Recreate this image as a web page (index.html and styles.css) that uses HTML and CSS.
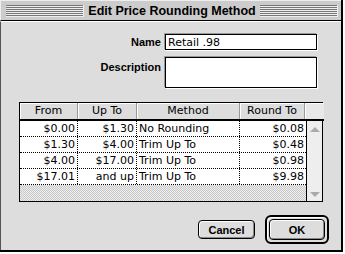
FILE: index.html
```html
<!DOCTYPE html>
<html lang="en">
<head>
  <meta charset="UTF-8" />
  <title>Edit Price Rounding Method</title>
  <link rel="stylesheet" href="styles.css">
</head>
<body>
  <div class="window">
    <div class="title-bar">
      <span class="stripes"></span>
      <span class="title">Edit Price Rounding Method</span>
      <span class="stripes"></span>
    </div>

    <div class="content">
      <div class="fields">
        <label for="name">Name</label>
        <input type="text" id="name" value="Retail .98" />
        <label for="desc" class="desc-label">Description</label>
        <textarea id="desc"></textarea>
      </div>

      <div class="table">
        <div class="head">
          <div class="th">From</div>
          <div class="th">Up To</div>
          <div class="th">Method</div>
          <div class="th">Round To</div>
          <div class="th corner"></div>
        </div>
        <div class="body">
          <div class="rows">
            <div class="row">
              <div class="td num">$0.00</div>
              <div class="td num">$1.30</div>
              <div class="td">No Rounding</div>
              <div class="td num">$0.08</div>
            </div>
            <div class="row">
              <div class="td num">$1.30</div>
              <div class="td num">$4.00</div>
              <div class="td">Trim Up To</div>
              <div class="td num">$0.48</div>
            </div>
            <div class="row">
              <div class="td num">$4.00</div>
              <div class="td num">$17.00</div>
              <div class="td">Trim Up To</div>
              <div class="td num">$0.98</div>
            </div>
            <div class="row">
              <div class="td num">$17.01</div>
              <div class="td num">and up</div>
              <div class="td">Trim Up To</div>
              <div class="td num">$9.98</div>
            </div>
            <div class="filler"></div>
          </div>
          <div class="scrollbar">
            <span class="arrow up"></span>
            <span class="arrow down"></span>
          </div>
        </div>
      </div>

      <div class="buttons">
        <button class="btn">Cancel</button>
        <span class="default-ring"><button class="btn ok">OK</button></span>
      </div>
    </div>
  </div>
</body>
</html>
```

FILE: styles.css
```css
body {
  margin: 0;
  background: #fff;
  font-family: "DejaVu Sans", sans-serif;
}

.window {
  width: 343px;
  height: 252px;
  background: #dddddd;
  border-right: 2px solid #000;
  border-bottom: 2px solid #000;
  display: flex;
  flex-direction: column;
  box-sizing: border-box;
}

.title-bar {
  height: 21px;
  background: #cccccc;
  border-top: 1px solid #eee;
  border-left: 1px solid #eee;
  border-bottom: 1px solid #000;
  box-sizing: border-box;
  display: flex;
  align-items: center;
  padding: 0 3px 0 5px;
  gap: 4px;
}

.stripes {
  flex: 1;
  height: 11px;
  background: repeating-linear-gradient(to bottom, #777 0 1px, #eee 1px 2px);
  border-right: 1px solid #eee;
  border-bottom: 1px solid #eee;
}

.title {
  font-family: "Liberation Sans", Arial, sans-serif;
  font-weight: bold;
  font-size: 12.5px;
  color: #000;
}

.content {
  flex: 1;
  border-left: 1px solid #555;
  border-top: 1px solid #fff;
  padding: 12px 22px 0 18px;
  display: flex;
  flex-direction: column;
}

.fields {
  display: grid;
  grid-template-columns: 145px 152px;
  column-gap: 4px;
  row-gap: 7px;
  justify-content: end;
  margin-right: 2px;
}

.fields label {
  font-family: "Liberation Sans", Arial, sans-serif;
  font-weight: bold;
  font-size: 11px;
  text-align: right;
  padding-top: 2px;
}

.fields .desc-label {
  padding-top: 4px;
}

.fields input,
.fields textarea {
  border: 1px solid #000;
  box-shadow: 1px 1px 0 #fff, -1px -1px 0 #999;
  font-family: "DejaVu Sans", sans-serif;
  font-size: 11px;
  padding: 0 2px;
  margin: 0;
  box-sizing: border-box;
  outline: none;
  resize: none;
}

.fields input {
  height: 16px;
}

.fields textarea {
  height: 31px;
}

.table {
  margin-top: 14px;
  width: 302px;
  border: 1px solid #000;
  background: #fff;
  font-size: 11px;
}

.head {
  display: grid;
  grid-template-columns: 58px 59px 103px 65px 1fr;
  height: 16px;
  border-bottom: 2px solid #000;
  margin-right: -2px;
}

.th {
  background: #dddddd;
  border-right: 1px solid #999;
  box-shadow: inset 1px 1px 0 #fff;
  text-align: center;
  line-height: 16px;
}

.th.corner {
  background: #e8e8e8;
  border-right: none;
}

.body {
  display: flex;
  height: 80px;
}

.rows {
  flex: 1;
  display: flex;
  flex-direction: column;
}

.row {
  display: grid;
  grid-template-columns: 58px 59px 103px 1fr;
  height: 16px;
  flex-shrink: 0;
  border-bottom: 1px dotted #000;
  box-sizing: border-box;
}

.td {
  line-height: 15px;
  padding: 0 2px;
  border-right: 1px dotted #000;
  white-space: nowrap;
}

.td:last-child {
  border-right: none;
}

.td.num {
  text-align: right;
}

.filler {
  flex: 1;
  background: repeating-conic-gradient(#c8c8c8 0 25%, #eeeeee 0 50%) 0 0 / 2px 2px;
}

.scrollbar {
  width: 16px;
  background: #eeeeee;
  border-left: 1px solid #000;
  display: flex;
  flex-direction: column;
  justify-content: space-between;
  align-items: center;
  padding: 6px 0 4px;
  box-sizing: border-box;
}

.arrow {
  width: 0;
  height: 0;
  border-left: 5px solid transparent;
  border-right: 5px solid transparent;
}

.arrow.up {
  border-bottom: 5px solid #aaa;
}

.arrow.down {
  border-top: 5px solid #aaa;
}

.buttons {
  display: flex;
  justify-content: flex-end;
  align-items: center;
  gap: 10px;
  margin-top: 13px;
  margin-right: -10px;
}

.btn {
  font-family: "Liberation Sans", Arial, sans-serif;
  font-weight: bold;
  font-size: 11px;
  color: #000;
  background: #dddddd;
  border: 1px solid #000;
  border-radius: 4px;
  box-shadow: inset 1px 1px 0 #fff, inset -1px -1px 0 #888;
  width: 57px;
  height: 19px;
  padding: 0;
  cursor: pointer;
}

.default-ring {
  display: inline-flex;
  border: 2px solid #000;
  border-radius: 6px;
  padding: 2px;
  box-shadow: inset 1px 1px 0 #fff;
}

.btn.ok {
  width: 56px;
  height: 21px;
}
```
